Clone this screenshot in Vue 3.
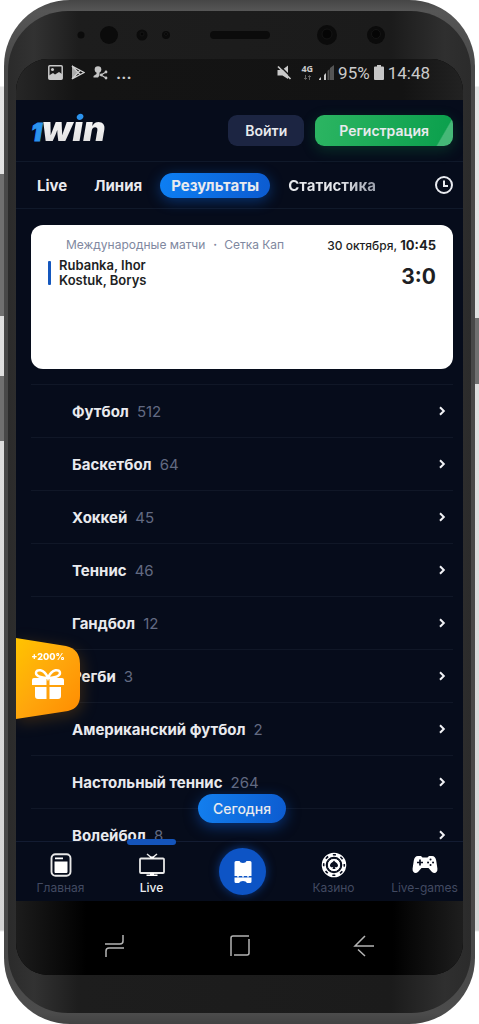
<script setup>
import { ref } from 'vue'

const tabs = ['Live', 'Линия', 'Результаты', 'Статистика']
const activeTab = ref('Результаты')

const sports = [
  { name: 'Футбол', count: 512 },
  { name: 'Баскетбол', count: 64 },
  { name: 'Хоккей', count: 45 },
  { name: 'Теннис', count: 46 },
  { name: 'Гандбол', count: 12 },
  { name: 'Регби', count: 3 },
  { name: 'Американский футбол', count: 2 },
  { name: 'Настольный теннис', count: 264 },
  { name: 'Волейбол', count: 8 },
]
</script>

<template>
  <div class="stage">
    <i class="side volume"></i>
    <i class="side assist"></i>
    <i class="side power"></i>

    <div class="phone">
      <div class="body">
        <div class="sensors">
          <svg width="340" height="34" viewBox="0 0 340 34" aria-hidden="true">
            <g fill="#0b0b0b">
              <circle cx="11" cy="18" r="3.5" />
              <circle cx="39" cy="18" r="9" />
              <circle cx="72" cy="18" r="5.5" />
              <circle cx="96" cy="18" r="4" />
              <rect x="140" y="14" width="60" height="8" rx="4" />
              <circle cx="257" cy="18" r="10" />
              <circle cx="306" cy="18" r="9" />
            </g>
            <g fill="#050505" stroke="#141414" stroke-width="1">
              <circle cx="72" cy="17" r="2" />
              <circle cx="96" cy="17" r="1.5" />
              <circle cx="257" cy="17" r="5" />
              <circle cx="306" cy="17" r="4.5" />
            </g>
          </svg>
        </div>

        <div class="screen">
          <div class="status">
            <div class="status-group">
              <svg width="15" height="15" viewBox="0 0 15 15" aria-hidden="true">
                <rect x="0.8" y="0.8" width="13.4" height="13.4" rx="1" fill="none" stroke="#c9c9c9" stroke-width="1.5" />
                <path d="M1 14V10.500L5 8l2 1.600L11 7l3 2v5Z" fill="#c9c9c9" />
                <circle cx="4.5" cy="4.5" r="1.500" fill="#c9c9c9" />
              </svg>
              <svg width="14" height="15" viewBox="0 0 14 15" aria-hidden="true">
                <path d="M1 1v13l6-6.500Z" fill="#aaa" />
                <path d="M1 1l12 6.500L1 14M1 1l8.500 9M1 14l8.500-9" fill="none" stroke="#d0d0d0" stroke-width="1.400" />
              </svg>
              <svg width="15" height="15" viewBox="0 0 15 15" aria-hidden="true">
                <circle cx="5" cy="4.500" r="3.300" fill="#c4c4c4" />
                <path d="M3.500 7v2L.5 11v1.500h4.500l1.500-2V7Z" fill="#c4c4c4" />
                <path d="M13 7 8 10l5 3" fill="none" stroke="#c4c4c4" stroke-width="1.200" />
                <circle cx="13" cy="7" r="1.400" fill="#c4c4c4" />
                <circle cx="8.300" cy="10" r="1.400" fill="#c4c4c4" />
                <circle cx="13" cy="13" r="1.400" fill="#c4c4c4" />
              </svg>
              <span class="more">...</span>
            </div>
            <div class="status-group right">
              <svg class="mute" width="15" height="15" viewBox="0 0 15 15" aria-hidden="true">
                <path d="M.5 5H5L11 .5V14L5.500 10.500h-5Z" fill="#c9c9c9" />
                <path d="M2.500 .5 15 13" stroke="#151515" stroke-width="1.400" />
                <path d="M1 1.500 13.500 14" stroke="#c9c9c9" stroke-width="1.700" />
              </svg>
              <span class="net">4G<svg width="9" height="5" viewBox="0 0 9 5" aria-hidden="true"><path d="M2.500 0v4M1 3l1.500 1.500L4 3M6.500 5V1M5 2l1.500-1.500L8 2" fill="none" stroke="#666" /></svg></span>
              <svg width="15" height="15" viewBox="0 0 15 15" aria-hidden="true">
                <path d="M0 15v-1l2-2v3ZM5 15v-5l2-2v7Z" fill="#c9c9c9" />
                <path d="M8.500 15V6l2-2v11ZM11 15V3l4-3v15Z" fill="#555" />
              </svg>
              <span class="digits">95%</span>
              <svg width="10" height="15" viewBox="0 0 10 15" aria-hidden="true">
                <path d="M3 0h4v1.500h2a1 1 0 0 1 1 1V14a1 1 0 0 1-1 1H1a1 1 0 0 1-1-1V2.500a1 1 0 0 1 1-1h2Z" fill="#c6c6c6" />
              </svg>
              <span class="digits">14:48</span>
            </div>
          </div>

          <div class="app">
            <header class="header">
              <a class="logo" href="#" aria-label="1win"><span class="one">1</span><span class="win">win</span></a>
              <div class="auth">
                <button class="login" type="button">Войти</button>
                <button class="signup" type="button">Регистрация</button>
              </div>
            </header>

            <nav class="tabs">
              <div class="tab-list">
                <button
                  v-for="tab in tabs"
                  :key="tab"
                  type="button"
                  class="tab"
                  :class="{ active: tab === activeTab }"
                  @click="activeTab = tab"
                >{{ tab }}</button>
              </div>
              <button class="history" type="button" aria-label="История">
                <svg width="20" height="20" viewBox="0 0 20 20" fill="none" stroke="#e9ebf0" stroke-width="2">
                  <circle cx="10" cy="10" r="8" />
                  <path d="M10 5.500V11h4" />
                </svg>
              </button>
            </nav>

            <main class="content">
              <article class="match">
                <div class="match-head">
                  <span class="league">Международные матчи ・ Сетка Кап</span>
                  <span class="date">30 октября, <b>10:45</b></span>
                </div>
                <div class="match-row">
                  <div class="players">
                    <span>Rubanka, Ihor</span>
                    <span>Kostuk, Borys</span>
                  </div>
                  <span class="score">3:0</span>
                </div>
              </article>

              <ul class="sports">
                <li v-for="sport in sports" :key="sport.name">
                  <a class="sport" href="#">
                    <span class="name">{{ sport.name }}</span>
                    <span class="count">{{ sport.count }}</span>
                    <svg class="chevron" width="8" height="10" viewBox="0 0 8 10" aria-hidden="true">
                      <path d="M2 1.200 5.800 5 2 8.800" fill="none" stroke="#f1f2f5" stroke-width="2" />
                    </svg>
                  </a>
                </li>
              </ul>

              <button class="bonus" type="button">
                <svg class="bonus-shape" viewBox="0 0 64 82" aria-hidden="true">
                  <defs>
                    <linearGradient id="gold" x1="0" y1="0" x2="1" y2="1">
                      <stop offset="0" stop-color="#ffc400" />
                      <stop offset="0.500" stop-color="#ffa60c" />
                      <stop offset="1" stop-color="#ff8a00" />
                    </linearGradient>
                  </defs>
                  <path d="M0 0 50 8Q64 11 64 26V58Q64 70 52 73L0 81Z" fill="url(#gold)" />
                </svg>
                <span class="bonus-text">+200%</span>
                <svg class="gift" width="34" height="32" viewBox="0 0 34 32" aria-hidden="true">
                  <path d="M17 10C13 10 5 9 5 5S13 0 17 10C21 0 29 1 29 5s-8 5-12 5Z" fill="none" stroke="#fff" stroke-width="2.500" />
                  <path d="M3 10h12.500v7H1v-5a2 2 0 0 1 2-2ZM18.500 10H31a2 2 0 0 1 2 2v5H18.500ZM4 19h11.500v12H7a3 3 0 0 1-3-3ZM18.500 19H30v9a3 3 0 0 1-3 3h-8.500Z" fill="#fff" />
                </svg>
              </button>

              <button class="today" type="button">Сегодня</button>
            </main>

            <nav class="bottom">
              <a class="item" href="#">
                <svg width="22" height="24" viewBox="0 0 22 24" aria-hidden="true">
                  <rect x="1.500" y="1.200" width="19" height="21.600" rx="4" fill="none" stroke="#e8e8e8" stroke-width="1.900" />
                  <path d="M5 4.500h8v1.800H5ZM4.500 8.500h13V19a1 1 0 0 1-1 1h-11a1 1 0 0 1-1-1Z" fill="#fff" />
                </svg>
                <span>Главная</span>
              </a>
              <a class="item current" href="#">
                <svg width="26" height="24" viewBox="0 0 26 24" aria-hidden="true">
                  <rect x="1" y="5.500" width="24" height="14.500" rx="1" fill="none" stroke="#e8e8e8" stroke-width="1.800" />
                  <path d="m8 1 5 4 5-4" fill="none" stroke="#e8e8e8" stroke-width="1.500" />
                  <path d="M10.500 3.500h5L14.500 5.500h-3ZM11 20h4v1.500h3.500V23h-11v-1.500H11Z" fill="#fff" />
                </svg>
                <span>Live</span>
              </a>
              <button class="coupon" type="button" aria-label="Купон">
                <svg width="18" height="24" viewBox="0 0 18 24" aria-hidden="true">
                  <path d="M2 1h3.500q.5 2 3.500 2T12.500 1H16q1.500 0 1.500 1.500V16H.5V2.500Q.5 1 2 1ZM.5 17.500h17v4q0 1.500-1.500 1.500h-3q-1-2-4-2T5 23H2Q.5 23 .5 21.500Z" fill="#fff" />
                  <path d="M3 16.800h2M8 16.800h2M13 16.800h2" stroke="#fff" />
                </svg>
              </button>
              <a class="item" href="#">
                <svg width="26" height="26" viewBox="0 0 26 26" aria-hidden="true">
                  <circle cx="13" cy="13" r="10.300" fill="none" stroke="#fff" stroke-width="4" />
                  <circle cx="13" cy="13" r="10.300" fill="none" stroke="#0a0f20" stroke-width="1.600" stroke-dasharray="3.090 5" stroke-dashoffset="1.500" />
                  <circle cx="13" cy="13" r="6.700" fill="#fff" stroke="#0a0f20" stroke-width="1" />
                  <path d="M13 8.500c1 1.600 4 2.800 4 5 0 1.800-2.300 2.200-3.300 1.200l.8 2.300h-3l.8-2.300C11.300 15.700 9 15.300 9 13.500c0-2.200 3-3.400 4-5Z" fill="#0a0f20" />
                </svg>
                <span>Казино</span>
              </a>
              <a class="item" href="#">
                <svg width="26" height="20" viewBox="0 0 26 20" aria-hidden="true">
                  <path d="M6 1h3l1.500 1.500h5L17 1h3c2.500 0 3.500 1.500 4.200 4.500l1.200 8c.5 4-2.900 6-5.400 3.500L16.500 13h-7L6 17C3.500 19.500.1 17.500.6 13.500l1.200-8C2.500 2.500 3.500 1 6 1Z" fill="#fff" />
                  <path d="M8 4.500v6M5 7.500h6" stroke="#0a0f20" stroke-width="1.700" />
                  <path d="M18.500 4.500h.1M16 7.500h.1M21 7.500h.1M18.500 10h.1" stroke="#0a0f20" stroke-width="1.900" stroke-linecap="round" />
                </svg>
                <span>Live-games</span>
              </a>
            </nav>
          </div>

          <div class="softkeys">
            <button type="button" aria-label="Недавние">
              <svg width="22" height="24" viewBox="0 0 22 24"><path d="M1 10h15q3 0 3-3V1M20 14H5q-3 0-3 3v6" /></svg>
            </button>
            <button type="button" aria-label="Домой">
              <svg width="22" height="24" viewBox="0 0 22 24"><path d="M2 22V4q0-2 2-2h16M20 5v14q0 2-2 2H5" /></svg>
            </button>
            <button type="button" aria-label="Назад">
              <svg width="22" height="24" viewBox="0 0 22 24"><path d="M21 12H2L12 2M5 15.500 12 22" /></svg>
            </button>
          </div>
        </div>
      </div>
    </div>
  </div>
</template>

<style>
body {
  margin: 0;
  background: #fff;
}
</style>

<style scoped>
* {
  box-sizing: border-box;
}

button {
  border: 0;
  padding: 0;
  background: none;
  color: inherit;
  font: inherit;
}

a {
  color: inherit;
  text-decoration: none;
}

svg {
  display: block;
  flex: none;
}

.stage {
  position: relative;
  height: 100vh;
  min-height: 640px;
  padding: 0 4px;
  background: linear-gradient(#fff 0 86px, #e4e4e4 87px, #d4d4d4 930px, #fff 932px);
  font-family: Inter, "Liberation Sans", sans-serif;
  color: #e9eaee;
}

.side {
  position: absolute;
  width: 6px;
  background: #707070;
}

.volume {
  left: 0;
  top: 174px;
  height: 142px;
}

.assist {
  left: 0;
  top: 376px;
  height: 65px;
}

.power {
  right: 0;
  top: 318px;
  height: 66px;
}

.phone {
  position: relative;
  height: 100%;
  padding: 11px 4px;
  border-radius: 66px;
  background: linear-gradient(#464646, #565656 11px, #484848 70px, #484848 950px, #4c4c4c 1013px, #424242);
}

.body {
  display: flex;
  flex-direction: column;
  height: 100%;
  padding: 0 8px 38px;
  border-radius: 60px;
  background: linear-gradient(90deg, #2b2b2b, #323232 26px, #1d1d1d 70px, #1b1b1b calc(100% - 80px), #2f2f2f calc(100% - 26px), #2b2b2b);
}

.sensors {
  display: flex;
  justify-content: center;
  height: 48px;
  padding-top: 6px;
}

.screen {
  flex: 1;
  min-height: 0;
  display: flex;
  flex-direction: column;
  overflow: hidden;
  border-radius: 32px;
  background: #000;
}

.status {
  display: flex;
  justify-content: space-between;
  height: 41px;
  padding: 6px 33px 0 32px;
  background: linear-gradient(90deg, #262626, #141414 60px, #131313 calc(100% - 60px), #222);
  color: #cbcbcb;
  font-family: Roboto, sans-serif;
}

.status-group {
  display: flex;
  align-items: flex-start;
  gap: 8px;
}

.status-group.right {
  gap: 4px;
}

.more {
  font-size: 19px;
  font-weight: 500;
  line-height: 16px;
}

.mute {
  margin-right: 5px;
}

.net {
  display: flex;
  flex-direction: column;
  align-items: center;
  gap: 2px;
  margin-right: 2px;
  font: 700 9px/8px "Open Sans", sans-serif;
}

.digits {
  font-size: 17px;
  line-height: 16px;
}

.app {
  flex: 1;
  min-height: 0;
  display: flex;
  flex-direction: column;
  background: #060c1b;
}

.header {
  display: flex;
  align-items: center;
  justify-content: space-between;
  height: 62px;
  padding: 0 10px 0 15px;
  border-bottom: 1px solid #10192a;
}

.logo {
  display: flex;
  align-items: baseline;
  font-style: italic;
  font-weight: 900;
  line-height: 40px;
}

.one {
  font-size: 24px;
  color: #2b93ee;
  -webkit-text-stroke: 1px #2b93ee;
}

.win {
  padding-right: 3px;
  font-size: 35px;
  color: transparent;
  background: linear-gradient(#2b93ee 0 13px, #f4f4f4 14px, #dcdcdc);
  -webkit-background-clip: text;
  background-clip: text;
}

.auth {
  display: flex;
  gap: 11px;
}

.login,
.signup {
  height: 31px;
  border-radius: 9px;
  font-size: 14px;
  font-weight: 600;
}

.login {
  padding: 0 17px;
  background: #1c2542;
}

.signup {
  padding: 0 24px;
  background: linear-gradient(120deg, transparent 0 89%, #45b877 90%), linear-gradient(100deg, #2cb562, #0a9f4c);
  box-shadow: 0 4px 14px rgba(16, 160, 80, 0.25);
}

.tabs {
  display: flex;
  align-items: center;
  justify-content: space-between;
  height: 47px;
  padding: 0 9px 0 10px;
  border-bottom: 1px solid #10192a;
}

.tab-list {
  display: flex;
  gap: 5px;
}

.tab {
  height: 25px;
  padding: 0 11px;
  border-radius: 13px;
  font-size: 15px;
  font-weight: 700;
}

.tab.active {
  margin: 0 2px;
  background: linear-gradient(100deg, #0d7ff3, #0c5bd0);
  box-shadow: 0 3px 14px rgba(12, 100, 220, 0.45);
}

.tab:last-child {
  color: transparent;
  background: linear-gradient(90deg, #e6e8ec 55%, #858b99);
  -webkit-background-clip: text;
  background-clip: text;
}

.content {
  position: relative;
  flex: 1;
  min-height: 0;
  overflow: hidden;
  padding: 16px 10px 0 15px;
}

.match {
  min-height: 144px;
  padding: 13px 17px;
  border-radius: 12px;
  background: #fff;
  color: #1e1f24;
}

.match-head {
  display: flex;
  justify-content: space-between;
  padding-left: 18px;
  font-size: 12px;
  line-height: 14px;
}

.league {
  color: #8088a0;
}

.date {
  font-weight: 500;
}

.date b {
  font-size: 13px;
  font-weight: 700;
}

.match-row {
  display: flex;
  align-items: flex-start;
  justify-content: space-between;
  padding-top: 5px;
}

.players {
  position: relative;
  display: flex;
  flex-direction: column;
  padding-left: 11px;
  font-size: 13px;
  font-weight: 600;
  line-height: 15px;
}

.players::before {
  content: "";
  position: absolute;
  left: 0;
  top: 3px;
  width: 3px;
  height: 24px;
  border-radius: 1px;
  background: #1557bd;
}

.score {
  padding-top: 9px;
  font-size: 21px;
  font-weight: 700;
  line-height: 20px;
}

.sports {
  margin: 15px 0 0;
  padding: 0;
  list-style: none;
}

.sport {
  display: flex;
  align-items: center;
  gap: 8px;
  height: 53px;
  padding: 0 7px 0 41px;
  border-top: 1px solid #101727;
  font-size: 15px;
}

.name {
  font-weight: 700;
}

.count {
  color: #626a82;
}

.chevron {
  margin-left: auto;
}

.bonus {
  position: absolute;
  left: 0;
  bottom: 121px;
  display: flex;
  flex-direction: column;
  align-items: center;
  gap: 6px;
  width: 64px;
  height: 82px;
  padding-top: 14px;
  filter: drop-shadow(2px 4px 8px rgba(255, 150, 0, 0.2));
}

.bonus-shape {
  position: absolute;
  inset: 0;
}

.bonus-text,
.gift {
  position: relative;
}

.bonus-text {
  font-size: 9px;
  font-weight: 800;
  line-height: 10px;
  color: #fff;
}

.today {
  position: absolute;
  left: 182px;
  bottom: 18px;
  height: 29px;
  padding: 0 15px;
  border-radius: 15px;
  background: linear-gradient(100deg, #137fee, #0c5bd0);
  box-shadow: 0 4px 14px rgba(12, 90, 210, 0.5);
  font-size: 14px;
  font-weight: 500;
}

.bottom {
  display: grid;
  grid-template-columns: repeat(5, minmax(0, 1fr));
  height: 60px;
  margin: 0 -7px 0 -1px;
  border-top: 1px solid #131c32;
}

.item {
  position: relative;
  display: grid;
  grid-template-rows: 26px 14px;
  gap: 2px;
  place-items: center;
  align-content: start;
  padding-top: 10px;
  color: #424a61;
  font-size: 12px;
}

.item.current {
  color: #eceef2;
  font-weight: 500;
}

.item.current::before {
  content: "";
  position: absolute;
  top: -3px;
  width: 49px;
  height: 6px;
  border-radius: 3px;
  background: #1454ba;
}

.coupon {
  display: grid;
  place-items: center;
  place-self: center;
  width: 47px;
  height: 47px;
  border-radius: 50%;
  background: #0d54c5;
  box-shadow: 0 0 10px rgba(12, 84, 200, 0.6);
}

.softkeys {
  display: flex;
  align-items: center;
  justify-content: space-between;
  height: 74px;
  padding: 16px 88px 0;
  background: linear-gradient(90deg, #1c1c1c, #000 70px, #000 calc(100% - 70px), #1e1e1e);
}

.softkeys path {
  fill: none;
  stroke: #b4b4b4;
  stroke-width: 1.5px;
}
</style>
